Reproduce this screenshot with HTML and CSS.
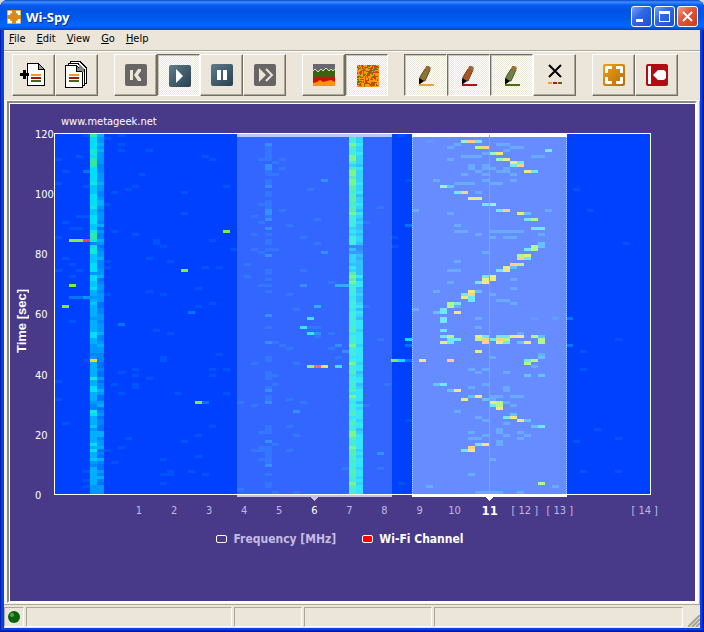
FILE: index.html
```html
<!DOCTYPE html>
<html lang="en">
<head>
<meta charset="utf-8">
<title>Wi-Spy</title>
<link rel="stylesheet" href="styles.css">
</head>
<body>
<div class="window">
  <header class="titlebar">
    <svg class="app-icon" width="14" height="14" viewBox="0 0 22 22" aria-hidden="true">
      <rect width="22" height="22" fill="#d98a10"/>
      <path d="M1 8V1H8V5H5V8ZM14 1H21V8H17V5H14ZM21 14V21H14V17H17V14ZM8 21H1V14H5V17H8Z" fill="#fff"/>
    </svg>
    <h1 class="title">Wi-Spy</h1>
    <div class="window-buttons">
      <button class="win-btn" aria-label="Minimize"><svg width="19" height="19"><rect x="4" y="12" width="7" height="3" fill="#fff"/></svg></button>
      <button class="win-btn" aria-label="Maximize"><svg width="19" height="19"><path d="M4 4H15V15H4ZM5 7V14H14V7Z" fill="#fff" fill-rule="evenodd"/></svg></button>
      <button class="win-btn close" aria-label="Close"><svg width="19" height="19"><path d="M5 5L14 14M14 5L5 14" stroke="#fff" stroke-width="2" fill="none"/></svg></button>
    </div>
  </header>

  <nav class="menubar">
    <button class="menu"><u>F</u>ile</button>
    <button class="menu"><u>E</u>dit</button>
    <button class="menu"><u>V</u>iew</button>
    <button class="menu"><u>G</u>o</button>
    <button class="menu"><u>H</u>elp</button>
  </nav>

  <div class="toolbar" role="toolbar">
    <div class="group">
      <button class="tool" aria-label="New recording">
        <svg width="27" height="24" viewBox="0 0 27 24" shape-rendering="crispEdges">
          <path d="M7.500 .5H18L24.500 7V22.500H7.500Z" fill="#fff" stroke="#000"/>
          <path d="M18.500 .5V6.500H24.500Z" fill="#999" stroke="#000"/>
          <path d="M0 10H9V13H0ZM3 7H6V16H3Z" fill="#000"/>
          <path d="M11 11H21V13H11Z" fill="#f0962c"/><path d="M11 14H21V16H11Z" fill="#a01414"/><path d="M11 17H21V19H11Z" fill="#44681c"/>
        </svg>
      </button>
      <button class="tool" aria-label="Recordings">
        <svg width="23" height="28" viewBox="0 0 23 28" shape-rendering="crispEdges">
          <path d="M5.500 .5H15L21.500 7V22.500H5.500Z" fill="#fff" stroke="#000"/>
          <path d="M3.500 2.500H13L19.500 9V24.500H3.500Z" fill="#fff" stroke="#000"/>
          <path d="M.5 4.500H11L17.500 11V26.500H.5Z" fill="#fff" stroke="#000"/>
          <path d="M11.500 4.500V10.500H17.500Z" fill="#888" stroke="#000"/>
          <path d="M14 3L19 8V11H17L14 7Z" fill="#888"/>
          <path d="M4 13H14V15H4Z" fill="#f0962c"/><path d="M4 16H14V18H4Z" fill="#a01414"/><path d="M4 19H14V21H4Z" fill="#44681c"/>
        </svg>
      </button>
    </div>
    <div class="group">
      <button class="tool" aria-label="Rewind">
        <svg width="22" height="22"><rect width="22" height="22" rx="2" fill="#686664"/><path d="M5 6H8V16H5ZM9 11L13 5H16V7L13 11L16 15V17H13Z" fill="#ebe6d9"/></svg>
      </button>
      <button class="tool pressed" aria-label="Play" aria-pressed="true">
        <svg width="22" height="22"><rect width="22" height="22" rx="2" fill="url(#steel)"/><path d="M7 4L14 11L7 18Z" fill="#fff"/></svg>
      </button>
      <button class="tool" aria-label="Pause">
        <svg width="22" height="22"><defs><linearGradient id="steel" x1="0" y1="0" x2="1" y2="1"><stop offset="0" stop-color="#5d7c8c"/><stop offset="1" stop-color="#29404e"/></linearGradient></defs><rect width="22" height="22" rx="2" fill="url(#steel)"/><path d="M6 6H10V16H6ZM12 6H16V16H12Z" fill="#fff"/></svg>
      </button>
      <button class="tool" aria-label="Fast forward">
        <svg width="22" height="22"><rect width="22" height="22" rx="2" fill="#686664"/><path d="M5 4L12 11L5 18Z" fill="#ebe6d9"/><path d="M12 5L18 11L12 17" fill="none" stroke="#ebe6d9" stroke-width="2"/></svg>
      </button>
    </div>
    <div class="group">
      <button class="tool" aria-label="Spectral view">
        <svg width="22" height="22"><rect width="22" height="22" fill="#686670"/><path d="M0 7L2 5L5 8L8 5L10 7L13 4L16 7L18 5L20 7L22 5V14H0Z" fill="#386410"/><path d="M0 7L2 5L5 8L8 5L10 7L13 4L16 7L18 5L20 7L22 5" fill="none" stroke="#d8e4b8"/><path d="M0 13L3 14L6 12L9 14L12 12L16 14L19 12L22 13V19H0Z" fill="#cc1010"/><path d="M0 19L4 18L7 16L10 18L14 17L18 16L22 18V22H0Z" fill="#ff9010"/></svg>
      </button>
      <button class="tool pressed" aria-label="Timeslice view" aria-pressed="true">
        <svg id="noise" width="22" height="22" shape-rendering="crispEdges"><rect width="22" height="22" fill="#ff9a08"/></svg>
      </button>
    </div>
    <div class="group">
      <button class="tool pressed" aria-label="Orange marker" aria-pressed="true">
        <svg width="22" height="22"><path d="M9 4L14 5L9 16L4 15V12Z" fill="#8c7430" stroke="#5c4c20"/><path d="M10 1H13L15 3L14 6L9 4Z" fill="#98683c"/><path d="M3 13L8 16L4 19H3Z" fill="#000"/><path d="M3 19H18V21H3Z" fill="#eca040"/></svg>
      </button>
      <button class="tool pressed" aria-label="Red marker" aria-pressed="true">
        <svg width="22" height="22"><path d="M9 4L14 5L9 16L4 15V12Z" fill="#a85424" stroke="#70401c"/><path d="M10 1H13L15 3L14 6L9 4Z" fill="#98683c"/><path d="M3 13L8 16L4 19H3Z" fill="#000"/><path d="M3 19H18V21H3Z" fill="#b01018"/></svg>
      </button>
      <button class="tool pressed" aria-label="Green marker" aria-pressed="true">
        <svg width="22" height="22"><path d="M9 4L14 5L9 16L4 15V12Z" fill="#6c8048" stroke="#4c5834"/><path d="M10 1H13L15 3L14 6L9 4Z" fill="#a06c3c"/><path d="M3 13L8 16L4 19H3Z" fill="#000"/><path d="M3 19H18V21H3Z" fill="#4c6c18"/></svg>
      </button>
      <button class="tool" aria-label="Clear markers">
        <svg width="22" height="22"><path d="M5 1L17 13M17 1L5 13" stroke="#000" stroke-width="2"/><path d="M4 18H8V20H4Z" fill="#eca040"/><path d="M9 18H13V20H9Z" fill="#b8101c"/><path d="M14 18H18V20H14Z" fill="#4c6c18"/></svg>
      </button>
    </div>
    <div class="group">
      <button class="tool" aria-label="Fit to window">
        <svg width="22" height="22"><defs><linearGradient id="amber" x1="0" y1="0" x2="1" y2="1"><stop offset="0" stop-color="#eca018"/><stop offset="1" stop-color="#b86c08"/></linearGradient></defs><rect width="22" height="22" rx="2" fill="url(#amber)"/><path d="M2 9V3L3 2H9V5H5V9ZM13 2H19L20 3V9H17V5H13ZM20 13V19L19 20H13V17H17V13ZM9 20H3L2 19V13H5V17H9Z" fill="#fff"/></svg>
      </button>
      <button class="tool" aria-label="Exit">
        <svg width="22" height="22"><rect width="22" height="22" rx="2" fill="#b00c14"/><path d="M2 2H5V20H2ZM7 11L12 6H18L20 8V14L18 16H12Z" fill="#fff"/></svg>
      </button>
    </div>
  </div>

  <main class="view">
    <div class="chart">
      <a class="site" href="#">www.metageek.net</a>
      <div class="y-title">Time [sec]</div>
      <div class="y-axis"><span>120</span><span>100</span><span>80</span><span>60</span><span>40</span><span>20</span><span>0</span></div>
      <svg class="plot" viewBox="0 0 597 362" role="img" aria-label="Signal level by channel and time" shape-rendering="crispEdges">
        <rect x="0" y="0" width="597" height="362" fill="#fff"/>
        <rect x="1" y="1" width="595" height="360" fill="#0040ff"/>
        <g id="cells" transform="translate(1 1)"></g>
        <rect x="183" y="1" width="155" height="360" fill="#fff" fill-opacity=".2"/>
        <rect x="183" y="1" width="155" height="3" fill="#b8c8ff"/>
        <rect x="183" y="362" width="155" height="2" fill="#cac4e0"/>
        <path d="M256 364H264L260 368Z" fill="#cac4e0"/>
        <rect x="358" y="1" width="155" height="360" fill="#fff" fill-opacity=".4"/>
        <path d="M358.500 4V361M512.500 4V361" stroke="#a8dcff" stroke-dasharray="1 1"/>
        <rect x="358" y="1" width="155" height="3" fill="#fff"/>
        <rect x="358" y="362" width="155" height="2" fill="#fff"/>
        <path d="M431 364H439L435 368Z" fill="#fff"/>
        <path d="M435.500 2V361" stroke="#60c0b8"/>
      </svg>
      <ol class="x-axis">
        <li>1</li><li>2</li><li>3</li><li>4</li><li>5</li><li class="on">6</li><li>7</li><li>8</li><li>9</li><li>10</li><li class="current">11</li><li>[ 12 ]</li><li>[ 13 ]</li><li class="last">[ 14 ]</li>
      </ol>
      <div class="legend">
        <label class="choice dim"><input type="radio" name="axis">Frequency [MHz]</label>
        <label class="choice"><input type="radio" name="axis" checked>Wi-Fi Channel</label>
      </div>
    </div>
  </main>

  <footer class="statusbar">
    <div class="cell led"><svg width="12" height="12"><circle cx="6" cy="6" r="6" fill="#086408"/><circle cx="4" cy="4" r="2" fill="#5c9c5c"/></svg></div>
    <div class="cell message"></div>
    <div class="cell short"></div>
    <div class="cell medium"></div>
    <div class="cell rest"></div>
    <svg class="grip" width="12" height="12"><path d="M0 12L12 0M4 12L12 4M8 12L12 8" stroke="#a8a492" stroke-width="2"/></svg>
  </footer>
</div>
<script src="plot.js"></script>
</body>
</html>
```
FILE: styles.css
```css
* { box-sizing: border-box; }

body {
  margin: 0;
  background: #d8d8d8;
  font: 11px/14px "DejaVu Sans Condensed", "DejaVu Sans", sans-serif;
  color: #000;
}

button {
  margin: 0;
  padding: 0;
  border: 0;
  background: none;
  font: inherit;
  color: inherit;
}

svg { display: block; }

.window {
  display: flex;
  flex-direction: column;
  min-height: 100vh;
  padding: 0 4px 4px;
  border-radius: 8px 8px 0 0;
  background: #0a3fe0;
  box-shadow: inset 1px 0 #0020b0, inset -1px -1px #0014a0, inset -2px -2px #0028c8;
}

.titlebar {
  display: flex;
  align-items: center;
  height: 30px;
  margin: 0 -4px;
  padding: 3px 6px 0 7px;
  border-radius: 8px 8px 0 0;
  background: linear-gradient(#0a44c8 0, #3c90ff 2px, #0a5cf0 5px, #0054e4 10px, #0058ec 18px, #0066ff 25px, #0060fc 27px, #0040c8 30px);
}

.title {
  flex: 1;
  margin: 0 0 0 5px;
  font: bold 13px/18px "Open Sans", sans-serif;
  color: #fff;
  text-shadow: 1px 1px #0a2c90;
}

.window-buttons { display: flex; gap: 2px; }

.win-btn {
  width: 21px;
  height: 21px;
  border: 1px solid #fff;
  border-radius: 3px;
  background: linear-gradient(135deg, #7ca0f4, #3068e8 40%, #1c50d0);
}

.win-btn.close { background: linear-gradient(135deg, #f0a088, #e0583c 40%, #c83c18); }

.menubar {
  display: flex;
  gap: 11px;
  height: 21px;
  padding: 1px 5px 3px;
  background: #ebe6d9;
  border-bottom: 1px solid #aca899;
}

.menu { line-height: 16px; }

.toolbar {
  display: flex;
  gap: 16px;
  height: 50px;
  padding: 2px 8px;
  background: #ebe6d9;
  border-top: 1px solid #fff;
  border-bottom: 1px solid #fff;
}

.group { display: flex; }

.tool {
  display: grid;
  place-items: center;
  width: 43px;
  height: 42px;
  border: 1px solid;
  border-color: #fff #716f64 #716f64 #fff;
  box-shadow: inset -1px -1px #aca899;
}

.tool.pressed {
  padding: 2px 0 0 2px;
  border-color: #716f64 #fff #fff #716f64;
  box-shadow: inset 1px 1px #c8c4b4;
  background: repeating-conic-gradient(#fff 0 25%, #ebe6d9 0 50%) 0 0 / 2px 2px;
}

.view {
  display: flex;
  flex: 1;
  padding: 0 2px 1px 3px;
  border-right: 1px solid #aca899;
  background: #f6f4ec;
}

.chart {
  flex: 1;
  display: grid;
  grid-template-columns: 26px 19px minmax(0, 1fr);
  align-content: start;
  padding: 12px 44px 0 0;
  border: 2px solid;
  border-color: #8c8a7c #fff #fff #8c8a7c;
  box-shadow: inset 1px 1px #fff;
  background: #483a88;
  color: #fff;
}

.site {
  grid-column: 3;
  margin: 0 0 4px 7px;
  color: #fff;
  text-decoration: none;
}

.y-title {
  grid-column: 1;
  align-self: center;
  justify-self: center;
  padding-bottom: 14px;
  writing-mode: vertical-rl;
  transform: rotate(180deg);
  font: bold 13px/14px "Liberation Sans", sans-serif;
}

.y-axis {
  display: flex;
  flex-direction: column;
  justify-content: space-between;
  margin: -5px 0 -8px;
}

.plot {
  width: 100%;
  height: auto;
  overflow: visible;
}

.x-axis {
  grid-column: 3;
  display: grid;
  grid-template-columns: repeat(13, 5fr) 10.5fr;
  margin: 9px 0 0;
  padding: 0 0 0 11.3%;
  list-style: none;
  text-align: center;
  color: #c0b8e4;
}

.x-axis .on { color: #fff; }

.x-axis .current {
  color: #fff;
  font-size: 13px;
  font-weight: bold;
}

.x-axis .last {
  margin-right: -7px;
  text-align: right;
}

.legend {
  grid-column: 1 / -1;
  display: flex;
  justify-content: center;
  gap: 26px;
  margin: 14px 0 0 20px;
  font: bold 12px/14px "DejaVu Sans Condensed", sans-serif;
}

.choice {
  display: flex;
  align-items: center;
  gap: 6px;
}

.choice.dim { color: #c4bce4; }

.choice input {
  appearance: none;
  width: 11px;
  height: 8px;
  margin: 0;
  border: 1px solid #fff;
  border-radius: 2px;
}

.choice input:checked { background: #f00; }

.statusbar {
  display: flex;
  gap: 2px;
  height: 24px;
  padding: 2px 0 1px;
  background: #ebe6d9;
  border-top: 1px solid #aca899;
}

.cell {
  border: 1px solid;
  border-color: #aca899 #fff #fff #aca899;
}

.led {
  display: grid;
  place-items: center;
  width: 20px;
}

.message { width: 206px; }
.short { width: 68px; }
.medium { width: 128px; }
.rest { flex: 1; }

.grip {
  align-self: flex-end;
  margin-left: 3px;
}
```
FILE: plot.js
```js
const CELL_W = 7;
const CELL_H = 3;
const NS = "http://www.w3.org/2000/svg";

function addRect(parent, x, y, w, h, fill) {
  const rect = document.createElementNS(NS, "rect");
  rect.setAttribute("x", x);
  rect.setAttribute("y", y);
  rect.setAttribute("width", w);
  rect.setAttribute("height", h);
  rect.setAttribute("fill", fill);
  parent.appendChild(rect);
}

// Signal levels; each cell is "column:row" on an 85 by 120 grid.
const levels = {
  "#0054ff": `4:0 9:0 7:1 9:3 9:5 13:5 3:7 0:8 21:7 22:8 1:12 12:13 0:16 4:17 11:17 10:18 24:17 8:19 18:19 7:23 18:26
    3:27 4:27 1:29 2:31 3:31 8:32 11:33 0:34 22:35 14:35 14:36 15:37 25:38 1:41 13:41 16:42 2:43 7:42 7:44 21:44 23:44
    0:45 3:45 2:47 20:51 13:52 15:53 7:53 22:56 20:57 2:62 14:65 16:66 23:73 15:74 15:75 4:75 11:78 11:80 11:83 11:84
    13:81 9:79 22:78 24:78 22:80 0:82 8:83 9:86 17:86 24:86 0:88 1:96 22:97 20:100 10:101 18:102 9:104 7:105 20:107
    15:108 8:109 4:112 16:112 16:113 15:113 19:112 21:113 15:116 4:115 4:117
    30:4 30:5 30:6 30:7 30:8 30:12 30:13 30:15 30:16 30:19 30:20 30:22 30:23 30:24 30:27 30:33 30:35 30:36 30:38 30:45
    30:46 30:48 30:50 30:52 29:8 32:8 31:9 32:11 31:13 36:18 29:23 32:25 28:27 37:28 29:29 33:30 28:33 35:34 37:36
    25:38 28:38 31:38 29:39 27:43 35:45 27:47 39:49 29:50 33:53 34:58 46:24 44:29 44:57 48:34 48:37 49:0 50:15
    30:60 30:64 36:64 37:64 37:67 39:66 31:69 32:70 33:71 39:71 40:74 30:74 30:75 28:76 34:76 30:79 30:80 30:81 31:80
    31:83 30:84 30:87 30:88 26:89 28:90 33:88 35:89 33:97 34:100 30:97 30:98 30:99 29:99 31:103 29:104 28:105 29:105
    30:104 30:105 30:106 30:107 33:105 29:108 30:108 30:109 30:113 30:116 30:117 26:118 31:119 34:119 44:90 47:83 46:68
    46:111 41:111 49:116 50:95 53:2 68:61 71:61 81:36 74:18 76:25 75:72 80:68 75:78 77:98 80:101 74:102 75:112 80:112`,
  "#0474ff": `4:12 2:54 3:54 19:59 9:63 21:89 30:3 30:10 30:11 30:17 30:25 30:26 30:28 30:31 30:40 30:60 38:15 38:39 35:50
    30:69 37:66 40:70 41:72 30:85 30:89 34:92 30:102 30:110 46:106 50:70 50:75 73:61 73:70
    56:4 63:3 64:3 56:8 58:7 59:7 60:7 61:6 64:5 65:4 66:4 59:10 59:11 61:10 61:11 62:11 63:12 64:12 65:9 58:13
    60:12 61:13 65:13 65:15 54:15 57:16 58:16 59:16 61:15 62:16 63:16 64:11 68:7 69:7 60:19 51:25 56:26 70:25 50:30
    57:30 57:32 58:32 62:32 63:32 64:32 65:32 66:32 69:33 62:34 64:34 65:34 61:39 57:42 56:45 56:49 65:48 65:51 54:52
    62:53 63:55 64:55 65:56 57:57 51:58 60:61 60:64 66:66 69:73 62:74 68:77 59:78 60:79 61:78 61:83 64:84
    64:85 59:84 65:87 66:87 62:87 63:87 62:88 64:89 65:90 57:92 60:94 61:95 64:96 63:98 63:99 59:99 59:101 60:101
    61:100 64:100 66:101 67:100 66:99 63:102 63:103 62:108 59:113 53:117 60:119 61:119 62:119 63:119 66:119 71:117
    60:33 64:79 66:95 57:45 57:3`,
  "#0098ff": `4:54 5:54 40:50 41:50 37:57 56:17 67:26 69:36 69:37 65:44 60:52 54:59 66:69 69:74 67:80 69:80 54:83 56:85
    59:87 61:88 65:93 67:95 68:97 69:67`,
  "#14d8f4": `36:61 35:64 36:66 40:77 50:68 60:2 66:9 65:10 68:12 70:5 57:19 61:23 63:25 67:28 68:31 69:31 67:38 67:41
    63:45 61:47 60:49 58:53 59:54 59:55 57:56 55:58 55:59 55:61 55:62 55:65 55:67 61:67 63:67 64:67 56:68 57:68 62:68
    56:69 64:69 67:75 55:83 62:90 64:94 69:97 60:103 58:105 49:75`,
  "#50f0a0": `58:2 62:6 63:8 55:17 62:23`,
  "#84ee3c": `24:32 2:35 3:35 18:45 2:50 1:57 20:89 48:75 36:77 60:4 68:28 68:37 68:38 66:40 66:43 56:56 56:57 56:67
    68:67 60:68 64:68 69:68 69:69 68:75 67:76 63:89 63:90 69:116`,
  "#e4dc2c": `5:75 38:77 63:6 64:8 65:9 67:12 59:21 60:21 66:26 67:40 64:44 64:45 62:47 61:48 62:48 61:49 59:52 58:54
    57:59 60:67 65:67 66:67 55:69 63:69 67:69 60:72 52:75 57:85 60:87 58:88 62:89 63:91 65:94 66:95 61:103 59:105`,
  "#ffb038": `59:2 61:4 66:10 58:19 64:25 66:41 65:43 59:53 61:68 63:68 61:69 56:75 59:104`,
  "#f43c5c": `4:35 37:77`
};

const ramp = {
  a: "#0070ff", b: "#0084ff", c: "#0098ff", d: "#00b0ff", e: "#00c8fc",
  f: "#00e0fc", g: "#14e8d4", h: "#30e8a0", i: "#58f468"
};

// Continuous carriers, run-length coded from the top row down.
const carriers = {
  5: "h1 f4 g2 f1 h3 f5 g1 e3 f4 g1 e2 f3 e2 g1 h2 g1 b1 f1 g2 e3 f3 c1 f2 e2 f1 d4 e1 d4 c1 d4 f2 d2 c3 b1 c1 e1 d1 d3 d1 g1 d2 f2 d3 c1 b2 g1 f1 d3 e1 c1 d4 f1 d1 f1 d2 e1 c1 b1 d6 c3 f1",
  6: "d1 c2 d1 c1 d1 c4 b3 c3 d1 c2 b2 c1 d2 c1 b1 c3 b1 d1 a1 c1 b2 d1 c1 a1 b1 c2 d1 b3 c2 d1 a1 b1 c2 b1 c3 a2 b2 c2 b1 c3 d1 b2 c1 d1 c2 b3 a2 b1 a2 c1 a1 b2 d1 c1 a2 c1 d1 a1 b1 c1 a1 b2 a2 d2 b1 c2 d1 a1 b1 a1 d1 b1 a2 c1 b1 d1 b1 a1 c3 a1 b1 d1 c1 b1 a1 b3 a1 b2 a2 b3 c1",
  42: "f1 g2 i1 h1 g2 i2 g1 e1 h1 i2 h1 i2 h2 g1 h3 g1 h2 i1 g4 e1 f1 e1 g3 a1 d1 b1 e3 d1 f1 e1 h1 i1 h1 i1 g4 f1 g3 f1 g6 h1 f1 g3 i1 g3 f1 g1 i1 g2 h1 f1 g4 h1 f1 i1 g1 f1 g3 h1 f1 g1 h1 g2 i2 h1 g2 i1 h2 g1 h1 g3 h2 g2 i1 h1 g1 h2 g1 i2 h1 f2",
  43: "f1 e2 f1 e2 f1 e3 d1 f1 e1 e3 f1 e2 f1 d1 e2 f1 e1 d1 f1 e1 d1 e1 d2 e1 d1 e2 d1 a2 b1 d1 c1 d5 f1 d1 f2 d2 e1 d2 e1 f1 d1 f1 e1 d1 f3 e1 f4 e1 f5 e1 f2 d1 e1 f2 d1 e1 f4 d1 f1 e1 f3 e1 f2 d1 e1 f5 e1 f1 e1 f3 e1 f2 e1 f1 e1 f4 e1 f2 e1 f3"
};

const cells = document.getElementById("cells");

for (const [column, runs] of Object.entries(carriers)) {
  let row = 0;
  for (const run of runs.split(" ")) {
    const length = Math.min(Number(run.slice(1)), 120 - row);
    if (length > 0) addRect(cells, column * CELL_W, row * CELL_H, CELL_W, length * CELL_H, ramp[run[0]]);
    row += length;
  }
  if (row < 120) addRect(cells, column * CELL_W, row * CELL_H, CELL_W, (120 - row) * CELL_H, ramp[column > 10 ? "f" : "c"]);
}

for (const [fill, list] of Object.entries(levels)) {
  for (const cell of list.trim().split(/\s+/)) {
    const [column, row] = cell.split(":").map(Number);
    addRect(cells, column * CELL_W, row * CELL_H, CELL_W, CELL_H, fill);
  }
}

// Speckle in the timeslice button.
const noise = document.getElementById("noise");
let seed = 2463534242;
function random() {
  seed ^= seed << 13;
  seed ^= seed >>> 17;
  seed ^= seed << 5;
  return (seed >>> 0) / 4294967296;
}
for (let i = 0; i < 170; i += 1) {
  const x = Math.floor(random() * 21);
  const y = Math.floor(random() * 21);
  const tall = random() < 0.4;
  addRect(noise, x, y, tall ? 1 : 2, tall ? 2 : 1, i % 2 ? "#d83c10" : "#7c7410");
}
```
